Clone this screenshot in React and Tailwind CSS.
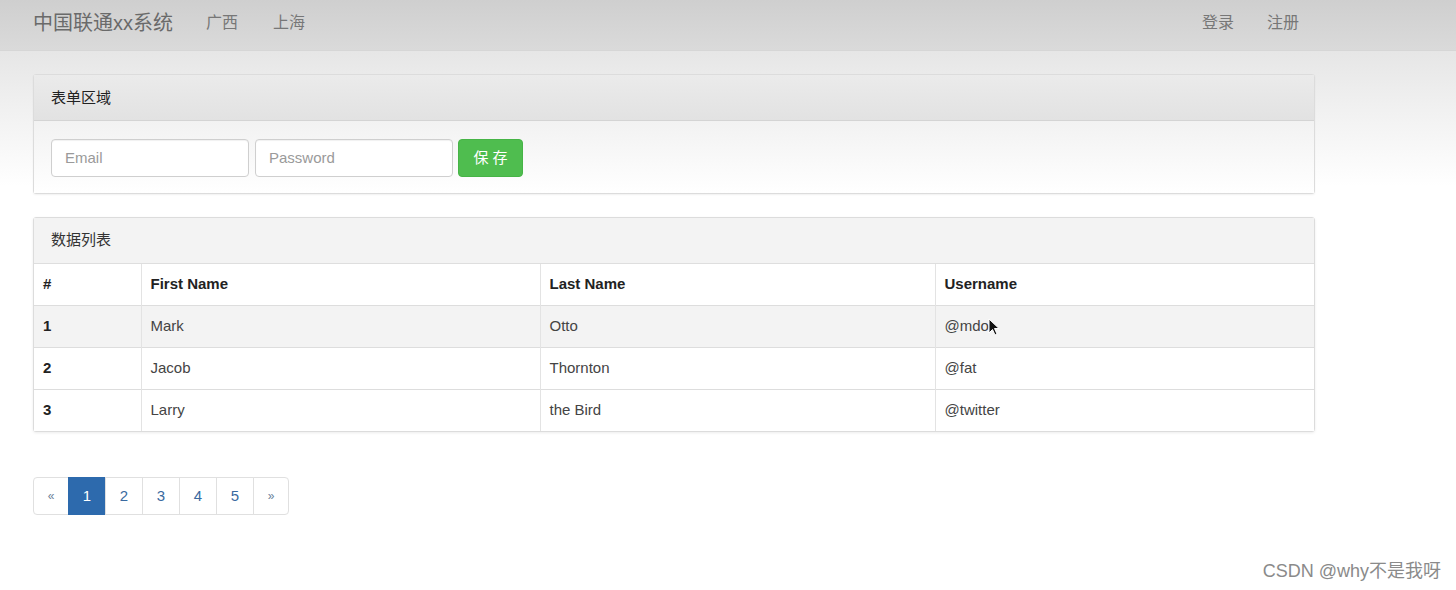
const font = { fontFamily: '"Liberation Sans", "Noto Sans CJK SC", sans-serif' };

const rows = [
  ["1", "Mark", "Otto", "@mdo"],
  ["2", "Jacob", "Thornton", "@fat"],
  ["3", "Larry", "the Bird", "@twitter"],
];

const pages = ["«", "1", "2", "3", "4", "5", "»"];

export default function App() {
  return (
    <div
      className="relative w-[1456px] h-[590px] overflow-hidden bg-white text-[#333]"
      style={font}
    >
      {/* navbar */}
      <div className="h-[51px] pb-[4px] flex items-center justify-between bg-gradient-to-b from-[#cfcfcf] to-[#dadada] border-b border-[#d6d6d6]">
        <div className="flex items-center pl-[33px]">
          <span className="text-[20px] text-[#6a6a6a]">中国联通xx系统</span>
          <span className="ml-[33px] text-[16px] text-[#777]">广西</span>
          <span className="ml-[35px] text-[16px] text-[#777]">上海</span>
        </div>
        <div className="flex items-center pr-[157px]">
          <span className="text-[16px] text-[#777]">登录</span>
          <span className="ml-[33px] text-[16px] text-[#777]">注册</span>
        </div>
      </div>

      {/* page body */}
      <div className="bg-gradient-to-b from-[#e6e6e6] via-white via-[25%] to-white h-[539px] pt-[23px] pl-[33px]">
        <div className="w-[1282px] flex flex-col">
          {/* form panel */}
          <div className="border border-[#dcdcdc] rounded-[3px] bg-white shadow-[0_1px_2px_rgba(0,0,0,0.06)]">
            <div className="h-[46px] pt-[2px] flex items-center px-[17px] bg-gradient-to-b from-[#ebebeb] to-[#e2e2e2] border-b border-[#d4d4d4] text-[15px] text-[#222]">
              表单区域
            </div>
            <div className="h-[72px] pt-[2px] flex items-center pl-[17px] gap-[6px] bg-gradient-to-b from-[#f2f2f2] to-white">
              <div className="w-[198px] h-[38px] border border-[#cfcfcf] rounded-[4px] bg-white flex items-center px-[13px] text-[15px] text-[#9a9a9a] shadow-[inset_0_1px_1px_rgba(0,0,0,0.06)]">
                Email
              </div>
              <div className="w-[198px] h-[38px] border border-[#cfcfcf] rounded-[4px] bg-white flex items-center px-[13px] text-[15px] text-[#9a9a9a] shadow-[inset_0_1px_1px_rgba(0,0,0,0.06)]">
                Password
              </div>
              <div className="ml-[-1px] w-[65px] h-[38px] rounded-[4px] bg-[#4fbd4f] border border-[#46b446] flex items-center justify-center text-[15px] text-white tracking-[4px] pl-[4px]">
                保存
              </div>
            </div>
          </div>

          {/* table panel */}
          <div className="mt-[23px] border border-[#dcdcdc] rounded-[3px] bg-white shadow-[0_1px_3px_rgba(0,0,0,0.08)]">
            <div className="h-[46px] flex items-center px-[17px] bg-[#f3f3f3] border-b border-[#dedede] text-[15px] text-[#333]">
              数据列表
            </div>
            <table className="w-full border-collapse text-[15px]">
              <colgroup>
                <col className="w-[107px]" />
                <col className="w-[399px]" />
                <col className="w-[395px]" />
                <col />
              </colgroup>
              <thead>
                <tr className="h-[41px]">
                  {["#", "First Name", "Last Name", "Username"].map((h, i) => (
                    <th
                      key={h}
                      className={`text-left font-bold text-[#222] px-[9px] ${i > 0 ? "border-l border-[#e3e3e3]" : ""}`}
                    >
                      {h}
                    </th>
                  ))}
                </tr>
              </thead>
              <tbody>
                {rows.map((r, ri) => (
                  <tr key={r[0]} className={`h-[42px] border-t border-[#dddddd] ${ri === 0 ? "bg-[#f3f3f3]" : "bg-white"}`}>
                    {r.map((c, i) => (
                      <td
                        key={i}
                        className={`px-[9px] ${i === 0 ? "font-bold text-[#222]" : "text-[#444] border-l border-[#e3e3e3]"}`}
                      >
                        {c}
                      </td>
                    ))}
                  </tr>
                ))}
              </tbody>
            </table>
          </div>

          {/* pagination */}
          <div className="mt-[45px] flex">
            {pages.map((p, i) => (
              <div
                key={i}
                className={`h-[38px] flex items-center justify-center border ${
                  i === 0 ? "w-[36px] rounded-l-[4px]" : i === pages.length - 1 ? "w-[36px] rounded-r-[4px] -ml-px" : "w-[38px] -ml-px"
                } ${
                  p === "1"
                    ? "bg-[#2d6aad] border-[#2d6aad] text-white"
                    : "bg-white border-[#e0e0e0] text-[#3a6aa0]"
                } ${i === 0 || i === pages.length - 1 ? "text-[12px] text-[#6a7f99]" : "text-[15px]"}`}
              >
                {p}
              </div>
            ))}
          </div>
        </div>
      </div>

      {/* mouse cursor */}
      <svg className="absolute left-[988px] top-[318px]" width="12" height="18" viewBox="0 0 12 18">
        <path d="M1 1 L1 15 L4.5 11.5 L7 17 L9 16 L6.5 10.5 L11 10.5 Z" fill="#111" stroke="#fff" strokeWidth="1" />
      </svg>

      {/* watermark */}
      <div className="absolute right-[15px] top-[558px] text-[18px] text-[#8a8a8a]">CSDN @why不是我呀</div>
    </div>
  );
}
